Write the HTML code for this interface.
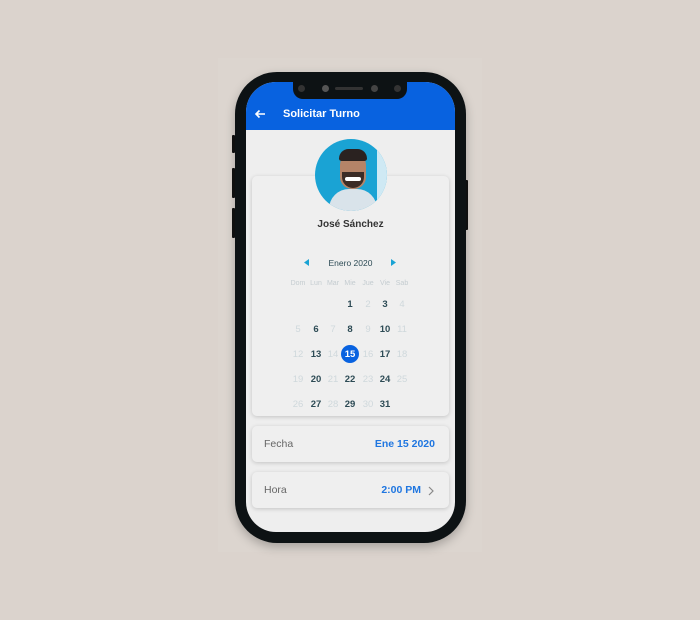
<!DOCTYPE html>
<html><head><style>
*{margin:0;padding:0;box-sizing:border-box}
body{width:700px;height:620px;background:#dbd3cd;position:relative;overflow:hidden;font-family:"Liberation Sans",sans-serif}
.abs{position:absolute}
.bg2{left:218px;top:58px;width:264px;height:494px;background:#dcd5cf}
.phone{left:235px;top:72px;width:231px;height:471px;background:#0d1214;border-radius:42px;box-shadow:0 4px 10px rgba(0,0,0,.25)}
.btn{background:#111;width:3px;border-radius:1px}
.screen{left:246px;top:82px;width:209px;height:450px;background:#eeeeee;border-radius:30px;overflow:hidden}
.hdr{left:0;top:0;width:209px;height:48px;background:#0862e0}
.notch{left:47px;top:0;width:114px;height:17px;background:#0d1214;border-radius:0 0 10px 10px}
.card{background:#efefef;border-radius:5px;box-shadow:0 1px 4px rgba(0,0,0,.18)}
.c{position:absolute;width:16px;text-align:center;font-size:9.5px;font-weight:bold;color:#2d4b55}
.l{color:#cfd8dc;font-weight:normal}
.h{position:absolute;width:18px;text-align:center;font-size:7px;color:#c4ccd0}
</style></head><body>
<div class="abs bg2"></div>
<div class="abs btn" style="left:232px;top:135px;height:18px"></div>
<div class="abs btn" style="left:232px;top:168px;height:30px"></div>
<div class="abs btn" style="left:232px;top:208px;height:30px"></div>
<div class="abs btn" style="left:465px;top:180px;height:50px"></div>
<div class="abs phone"></div>
<div class="abs screen">
 <div class="abs hdr">
  <svg class="abs" style="left:8px;top:27px" width="12" height="10" viewBox="0 0 12 10"><path d="M11 5H2M5.5 1.5L2 5l3.5 3.5" stroke="#fff" stroke-width="1.6" fill="none"/></svg>
  <div class="abs" style="left:37px;top:26px;color:#fff;font-size:11px;font-weight:bold">Solicitar Turno</div>
 </div>
 <div class="abs notch">
  <div class="abs" style="left:5px;top:3px;width:7px;height:7px;border-radius:50%;background:#333"></div>
  <div class="abs" style="left:29px;top:3px;width:7px;height:7px;border-radius:50%;background:#555"></div>
  <div class="abs" style="left:42px;top:5px;width:28px;height:3px;border-radius:2px;background:#333"></div>
  <div class="abs" style="left:78px;top:3px;width:7px;height:7px;border-radius:50%;background:#444"></div>
  <div class="abs" style="left:101px;top:3px;width:7px;height:7px;border-radius:50%;background:#333"></div>
 </div>
 <div class="abs card" style="left:6px;top:94px;width:197px;height:240px"></div>
 <div class="abs" style="left:69px;top:57px;width:72px;height:72px;border-radius:50%;background:#1aa3d4;overflow:hidden">
  <div class="abs" style="left:62px;top:0;width:14px;height:72px;background:#cfe9f4"></div>
  <div class="abs" style="left:14px;top:50px;width:48px;height:30px;border-radius:20px 20px 0 0;background:#d9e3ea"></div>
  <div class="abs" style="left:25px;top:14px;width:26px;height:36px;border-radius:12px;background:#b58468"></div>
  <div class="abs" style="left:24px;top:10px;width:28px;height:12px;border-radius:12px 12px 3px 3px;background:#2a2220"></div>
  <div class="abs" style="left:27px;top:33px;width:22px;height:16px;border-radius:0 0 11px 11px;background:#3b2c26"></div>
  <div class="abs" style="left:30px;top:38px;width:16px;height:4px;border-radius:2px;background:#fff"></div>
 </div>
 <div class="abs" style="left:0;width:209px;top:137px;text-align:center;font-size:10px;font-weight:bold;color:#333">José Sánchez</div>
 <svg class="abs" style="left:58px;top:177px" width="6" height="7"><path d="M5 0V7L0 3.5Z" fill="#1aa3d4"/></svg>
 <svg class="abs" style="left:145px;top:177px" width="6" height="7"><path d="M0 0V7L5 3.5Z" fill="#1aa3d4"/></svg>
 <div class="abs" style="left:0;width:209px;top:176px;text-align:center;font-size:8.5px;color:#2d4b55">Enero 2020</div>
 <div class="h" style="left:43px;top:198px">Dom</div><div class="h" style="left:61px;top:198px">Lun</div><div class="h" style="left:78px;top:198px">Mar</div><div class="h" style="left:95px;top:198px">Mie</div><div class="h" style="left:113px;top:198px">Jue</div><div class="h" style="left:130px;top:198px">Vie</div><div class="h" style="left:147px;top:198px">Sab</div>
 <div class="c" style="left:96px;top:217px">1</div><div class="c l" style="left:114px;top:217px">2</div><div class="c" style="left:131px;top:217px">3</div><div class="c l" style="left:148px;top:217px">4</div>
 <div class="c l" style="left:44px;top:242px">5</div><div class="c" style="left:62px;top:242px">6</div><div class="c l" style="left:79px;top:242px">7</div><div class="c" style="left:96px;top:242px">8</div><div class="c l" style="left:114px;top:242px">9</div><div class="c" style="left:131px;top:242px">10</div><div class="c l" style="left:148px;top:242px">11</div>
 <div class="c l" style="left:44px;top:267px">12</div><div class="c" style="left:62px;top:267px">13</div><div class="c l" style="left:79px;top:267px">14</div>
 <div class="abs" style="left:95px;top:263px;width:18px;height:18px;border-radius:50%;background:#0862e0"></div>
 <div class="c" style="left:96px;top:267px;color:#fff">15</div><div class="c l" style="left:114px;top:267px">16</div><div class="c" style="left:131px;top:267px">17</div><div class="c l" style="left:148px;top:267px">18</div>
 <div class="c l" style="left:44px;top:292px">19</div><div class="c" style="left:62px;top:292px">20</div><div class="c l" style="left:79px;top:292px">21</div><div class="c" style="left:96px;top:292px">22</div><div class="c l" style="left:114px;top:292px">23</div><div class="c" style="left:131px;top:292px">24</div><div class="c l" style="left:148px;top:292px">25</div>
 <div class="c l" style="left:44px;top:317px">26</div><div class="c" style="left:62px;top:317px">27</div><div class="c l" style="left:79px;top:317px">28</div><div class="c" style="left:96px;top:317px">29</div><div class="c l" style="left:114px;top:317px">30</div><div class="c" style="left:131px;top:317px">31</div>
 <div class="abs card" style="left:6px;top:344px;width:197px;height:36px"></div>
 <div class="abs" style="left:18px;top:356px;font-size:10.5px;color:#666">Fecha</div>
 <div class="abs" style="right:20px;top:356px;font-size:10.5px;font-weight:bold;color:#1f76e0">Ene 15 2020</div>
 <div class="abs card" style="left:6px;top:390px;width:197px;height:36px"></div>
 <div class="abs" style="left:18px;top:402px;font-size:10.5px;color:#666">Hora</div>
 <div class="abs" style="right:34px;top:402px;font-size:10.5px;font-weight:bold;color:#1f76e0">2:00 PM</div>
 <svg class="abs" style="left:182px;top:404px" width="6" height="10"><path d="M1 1l4 4-4 4" stroke="#888" stroke-width="1.2" fill="none"/></svg>
</div>
</body></html>
